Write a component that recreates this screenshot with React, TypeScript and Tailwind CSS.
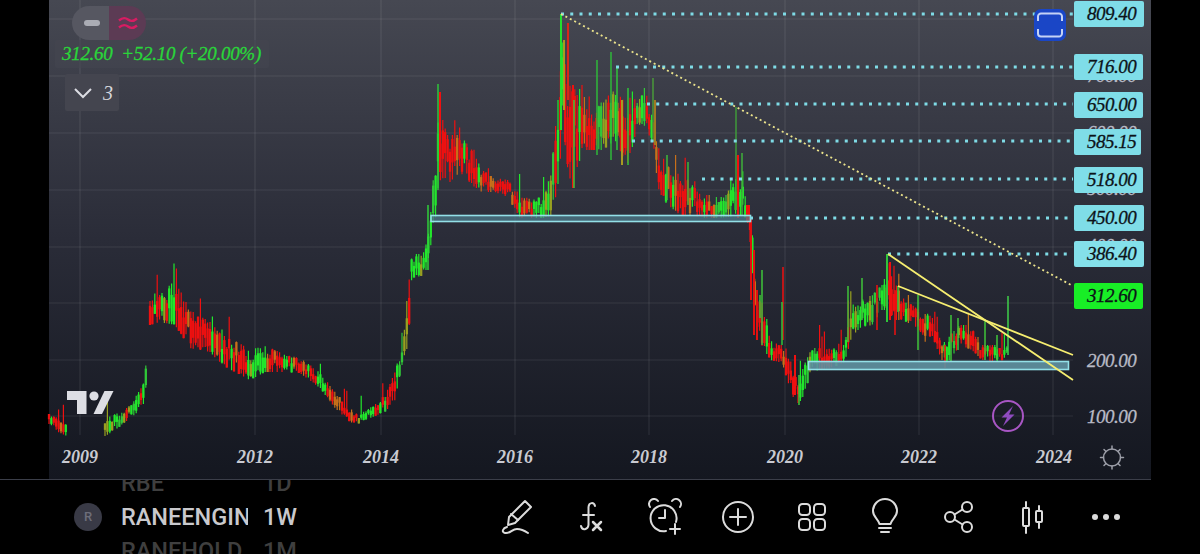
import React from 'react';

// price envelope of the bars: [x, top y, bottom y]
const SEGMENTS: number[][][] = [
  [[49, 414, 425], [58, 418, 432], [67, 425, 436]],
  [[105, 420, 436], [112, 415, 432], [122, 412, 425], [130, 405, 418], [138, 393, 412], [143, 385, 405], [147, 357, 395]],
  [
    [150, 292, 325], [160, 295, 322], [175, 280, 325], [190, 310, 348], [210, 322, 352], [222, 335, 365], [235, 340, 372],
    [250, 350, 380], [265, 345, 372], [285, 355, 372], [300, 358, 373], [320, 372, 388], [335, 392, 408], [350, 408, 422],
    [358, 415, 424], [370, 408, 418], [385, 395, 412], [395, 372, 400], [402, 345, 365], [408, 290, 345], [412, 255, 278],
    [425, 252, 275], [430, 215, 250], [436, 150, 215], [440, 110, 180], [447, 135, 185], [460, 135, 172], [472, 150, 185],
    [482, 170, 192], [495, 178, 192], [508, 180, 197], [520, 195, 218], [532, 200, 218], [545, 195, 218], [552, 165, 215],
    [558, 100, 190], [563, 40, 125], [569, 85, 180], [576, 90, 170], [584, 105, 150], [592, 115, 150], [603, 100, 150],
    [615, 90, 140], [627, 105, 165], [636, 105, 135], [645, 90, 125], [653, 115, 145], [658, 150, 195], [668, 165, 205],
    [680, 170, 215], [692, 185, 216], [704, 195, 218], [716, 195, 218], [730, 190, 217], [740, 170, 215], [747, 205, 218],
    [751, 218, 250], [754, 255, 300], [757, 297, 335], [764, 305, 350], [771, 340, 360], [779, 345, 362], [785, 345, 372],
    [792, 365, 395], [798, 385, 405], [804, 365, 395], [811, 350, 372], [820, 345, 370], [832, 350, 368], [845, 338, 362],
    [852, 305, 335], [862, 300, 328], [872, 295, 325], [882, 285, 310], [888, 270, 310], [894, 280, 320], [903, 298, 320],
    [912, 305, 325], [922, 312, 345], [932, 315, 335], [942, 345, 362], [950, 335, 360], [960, 325, 345], [972, 325, 350],
    [982, 345, 360], [995, 345, 362], [1003, 350, 360], [1008, 345, 352],
  ],
];

// the long wicks that stick out of the envelope
const SPIKES: [number, number, number, string, number][] = [
  [438, 84, 190, '#2fc43a', 1.5], [440, 92, 172, '#f01010', 2], [428, 205, 270, '#2fd03a', 1.5], [561, 14, 130, '#22e02c', 2], [564, 40, 110, '#a89a22', 2],
  [568, 23, 100, '#d8261a', 2], [573, 85, 188, '#f01010', 2], [574, 100, 188, '#3fc43a', 1.5], [597, 60, 155, '#2fb83a', 1.5], [611, 52, 160, '#2fb83a', 1.5],
  [617, 67, 150, '#2fc43a', 1.5], [628, 88, 165, '#2fc43a', 1.5], [622, 100, 165, '#a89a22', 2], [653, 78, 142, '#4a9a3a', 1.5], [655, 100, 145, '#a07a22', 2],
  [736, 107, 210, '#3f9a3a', 1.5], [742, 153, 215, '#3fb03a', 1.5], [738, 155, 218, '#f01010', 2], [667, 155, 200, '#3fb83a', 1.5], [688, 162, 205, '#3fb83a', 1.5],
  [748, 205, 222, '#f01010', 4], [751, 218, 300, '#e01010', 2], [754, 250, 335, '#e01010', 2], [757, 290, 340, '#e01010', 2],
  [783, 267, 340, '#f01010', 1.5], [782, 302, 345, '#2fc43a', 1.5], [848, 286, 342, '#3fc43a', 1.5], [862, 278, 320, '#3fc43a', 1.5], [877, 285, 330, '#f01010', 1.5],
  [887, 254, 322, '#2fc43a', 2], [890, 262, 320, '#f01010', 2], [895, 290, 335, '#f01010', 1.5], [898, 286, 312, '#2fc43a', 1.5], [918, 295, 350, '#3fc43a', 1.5],
  [945, 345, 368, '#f01010', 1.5], [951, 315, 362, '#3fc43a', 1.5], [958, 318, 350, '#3fc43a', 1.5], [985, 320, 360, '#3fc43a', 1.5], [997, 335, 360, '#3fc43a', 1.5],
  [1008, 296, 355, '#3fd04a', 1.5], [799, 375, 405, '#3fc43a', 1.5], [795, 355, 395, '#f01010', 2], [760, 295, 318, '#3fc43a', 1.5], [762, 270, 345, '#3fc43a', 1.5],
];

type Bar = { x: number; bt: number; bb: number; wt: number; wb: number; color: string };

function buildBars(): Bar[] {
  let seed = 11;
  const rnd = () => {
    seed = (seed * 16807) % 2147483647;
    return seed / 2147483647;
  };
  const falling = ['#f01010', '#f01010', '#f01010', '#f01010', '#22e82c', '#c8701a'];
  const rising = ['#22e82c', '#22e82c', '#22e82c', '#f01010', '#98a020', '#30c838'];
  const bars: Bar[] = [];
  for (const seg of SEGMENTS) {
    let i = 0;
    for (let x = seg[0][0]; x <= seg[seg.length - 1][0]; x += 2.4) {
      while (i < seg.length - 2 && x > seg[i + 1][0]) i++;
      const [x0, t0, b0] = seg[i];
      const [x1, t1, b1] = seg[i + 1];
      const f = (x - x0) / (x1 - x0);
      const top = t0 + (t1 - t0) * f;
      const bot = b0 + (b1 - b0) * f;
      const h = bot - top;
      const a = top + rnd() * h * 0.5;
      const b = a + Math.max(3, h * (0.3 + rnd() * 0.4));
      const pool = t1 >= t0 ? falling : rising;
      // now and then a wick pokes out above the envelope
      const poke = rnd() < 0.14 ? 6 + rnd() * 16 : 0;
      bars.push({
        x,
        bt: a,
        bb: Math.min(b, bot),
        wt: Math.max(top, a - rnd() * h * 0.5) - poke,
        wb: Math.min(bot, b + rnd() * h * 0.5),
        color: pool[Math.floor(rnd() * pool.length)],
      });
    }
  }
  return bars;
}

const BARS = buildBars();
const GRID_X = [80, 255, 381, 515, 649, 785, 919, 1053];
const GRID_Y = [19, 76, 133, 190, 247, 303, 360, 416];
const DOTTED: [number, number][] = [[561, 14], [616, 67], [647, 104], [632, 141], [702, 179], [750, 218], [888, 254]];

const AxisPrice = ({ top, children }: { top: string; children: string }) => (
  <span className={`absolute left-[1087px] ${top} text-[19px] leading-none italic tracking-[-0.5px] text-[#b9bbc6] [-webkit-text-stroke:0.3px]`}>{children}</span>
);

const PRICE_TAGS = [
  { text: '809.40', cls: 'top-[1px] w-[70px] bg-[#7fdde8]' },
  { text: '716.00', cls: 'top-[54px] w-[69px] bg-[#7fdde8]' },
  { text: '650.00', cls: 'top-[92px] w-[69px] bg-[#7fdde8]' },
  { text: '585.15', cls: 'top-[129px] w-[67px] bg-[#7fdde8]' },
  { text: '518.00', cls: 'top-[167px] w-[69px] bg-[#7fdde8]' },
  { text: '450.00', cls: 'top-[205px] w-[70px] bg-[#7fdde8]' },
  { text: '386.40', cls: 'top-[241px] w-[70px] bg-[#84e0ea]' },
  { text: '312.60', cls: 'top-[283px] w-[69px] bg-[#18ee26]' },
];

const YEARS = [
  { text: '2009', cls: 'left-[62px]' },
  { text: '2012', cls: 'left-[237px]' },
  { text: '2014', cls: 'left-[363px]' },
  { text: '2016', cls: 'left-[497px]' },
  { text: '2018', cls: 'left-[631px]' },
  { text: '2020', cls: 'left-[767px]' },
  { text: '2022', cls: 'left-[901px]' },
  { text: '2024', cls: 'left-[1036px]' },
];

const iconProps = {
  fill: 'none',
  stroke: '#dcdcdc',
  strokeWidth: 2,
  strokeLinecap: 'round' as const,
  strokeLinejoin: 'round' as const,
};

const Tool = ({ children }: { children: React.ReactNode }) => (
  <div className="flex w-[73.5px] justify-center">
    <svg width="36" height="38" viewBox="0 0 36 38" {...iconProps}>
      {children}
    </svg>
  </div>
);

const ChartCanvas = () => (
  <svg className="absolute left-0 top-0" width="1151" height="479" viewBox="0 0 1151 479">
    {GRID_Y.map((y) => (
      <line key={y} x1="49" x2="1073" y1={y} y2={y} stroke="#ffffff" strokeOpacity="0.09" strokeWidth="1.2" />
    ))}
    {GRID_X.map((x) => (
      <line key={x} x1={x} x2={x} y1="0" y2="435" stroke="#ffffff" strokeOpacity="0.09" strokeWidth="1.2" />
    ))}

    {BARS.map((b, i) => (
      <g key={i} stroke={b.color}>
        <line x1={b.x} x2={b.x} y1={b.wt} y2={b.wb} strokeWidth="1.2" />
        <line x1={b.x} x2={b.x} y1={b.bt} y2={b.bb} strokeWidth="2.3" />
      </g>
    ))}
    {SPIKES.map(([x, t, b, c, w], i) => (
      <line key={i} x1={x} x2={x} y1={t} y2={b} stroke={c} strokeWidth={w} />
    ))}

    <rect x="431" y="215.5" width="319.5" height="6" fill="#4f7f8e" fillOpacity="0.7" stroke="#93e0e8" strokeWidth="1.6" />
    <rect x="808.5" y="361.5" width="260" height="8" fill="#5f92a2" fillOpacity="0.9" stroke="#93e0e8" strokeWidth="1.6" />

    {DOTTED.map(([x, y]) => (
      <line key={y} x1={x} x2="1073" y1={y} y2={y} stroke="#7fdbe6" strokeWidth="3" strokeDasharray="3 6.25" />
    ))}

    <line x1="561" y1="14" x2="1073" y2="286" stroke="#ece48c" strokeWidth="1.8" strokeDasharray="2 3" />
    <line x1="888" y1="254" x2="1073" y2="380" stroke="#f6ee70" strokeWidth="1.8" />
    <line x1="898" y1="286" x2="1073" y2="355" stroke="#f6ee70" strokeWidth="1.8" />

    {/* tradingview mark */}
    <path d="M67 391H86.5V414H77V400H67Z" fill="#dddee4" />
    <circle cx="94" cy="396" r="4.6" fill="#dddee4" />
    <path d="M104.5 391H113.5L102 414H93.5Z" fill="#dddee4" />

    {/* bolt badge */}
    <circle cx="1008" cy="416" r="15" fill="none" stroke="#a856c4" strokeWidth="2" />
    <path d="M1013 406L1001.500 417.500H1007L1003 426L1014.500 414.500H1009Z" fill="#8f4cc0" />

    {/* sun */}
    <g fill="none" stroke="#9c9ea8" strokeWidth="1.5" strokeLinecap="round">
      <circle cx="1112" cy="457.500" r="8.500" />
      <path d="M1112 446V449M1112 466V469M1100.500 457.500H1103.500M1120.500 457.500H1123.500M1104 449.500L1106 451.500M1118 463.500L1120 465.500M1120 449.500L1118 451.500M1106 463.500L1104 465.500" />
    </g>
  </svg>
);

export default function App() {
  return (
    <div className="flex h-[554px] w-[1200px] flex-col overflow-hidden bg-black font-['Liberation_Serif',serif]">
      <div className="relative h-[480px] w-[1151px] border-b border-[#3b3e49]">
        <div className="absolute bottom-0 left-[49px] right-0 top-0 bg-linear-to-b from-[#464852] via-[#2a2c38] via-50% to-[#141720]" />
        <ChartCanvas />

        {/* price scale, most of it under the tags */}
        <AxisPrice top="top-[66px]">700.00</AxisPrice>
        <AxisPrice top="top-[123px]">600.00</AxisPrice>
        <AxisPrice top="top-[179px]">500.00</AxisPrice>
        <AxisPrice top="top-[236px]">400.00</AxisPrice>
        <AxisPrice top="top-[351px]">200.00</AxisPrice>
        <AxisPrice top="top-[407px]">100.00</AxisPrice>

        {PRICE_TAGS.map((t) => (
          <div key={t.text} className={`absolute left-[1074px] flex h-[26px] items-center rounded-[2px] pl-[13px] text-[19px] italic tracking-[-0.5px] text-[#0c1218] [-webkit-text-stroke:0.3px] ${t.cls}`}>
            {t.text}
          </div>
        ))}

        {/* legend */}
        <div className="absolute left-[72px] top-[6px] flex h-[34px] w-[74px] overflow-hidden rounded-full">
          <div className="flex w-[37px] items-center justify-center bg-[#565761]">
            <div className="ml-[2px] h-[6px] w-[16px] rounded-[3px] bg-[#aaacb4]" />
          </div>
          <div className="flex flex-1 items-center justify-center bg-[#5c3b54]">
            <svg width="20" height="16" viewBox="0 0 20 16" fill="none" stroke="#d81c62" strokeWidth="2.400">
              <path d="M1 5.500C5 2 8 3 10 4.500S15 7 19 3.500" />
              <path d="M1 12.500C5 9 8 10 10 11.500S15 14 19 10.500" />
            </svg>
          </div>
        </div>
        <div className="absolute left-[55px] top-[40px] flex h-[28px] w-[214px] items-center rounded-[2px] bg-[#454650]/60 pl-[7px] text-[19px] italic tracking-[-0.3px] text-[#2ad63a] whitespace-pre [-webkit-text-stroke:0.3px]">
          312.60  +52.10 (+20.00%)
        </div>
        <div className="absolute left-[65px] top-[74px] flex h-[37px] w-[54px] items-center gap-[11px] rounded-[2px] bg-[#44454f] pl-[9px] text-[20px] italic text-[#d6d7dd]">
          <svg width="18" height="12" viewBox="0 0 18 12" fill="none" stroke="#dcdde3" strokeWidth="2">
            <path d="M1 2L9 10L17 2" />
          </svg>
          3
        </div>

        {YEARS.map((y) => (
          <span key={y.text} className={`absolute top-[447px] text-[18px] font-bold italic leading-5 text-[#c9cad1] ${y.cls}`}>
            {y.text}
          </span>
        ))}

        {/* fullscreen button */}
        <div className="absolute left-[1034px] top-[9px] flex h-[32px] w-[32px] items-center justify-center rounded-[7px] bg-[#1a46c6]">
          <svg width="26" height="26" viewBox="0 0 26 26" fill="none" stroke="#c4d2f6" strokeWidth="2">
            <path d="M1 9V4.500A3 3 0 0 1 4 1.500H22A3 3 0 0 1 25 4.500V9" />
            <path d="M1 17V21.500A3 3 0 0 0 4 24.500H22A3 3 0 0 0 25 21.500V17" />
          </svg>
        </div>
      </div>

      <div className="flex flex-1 items-center overflow-hidden">
        {/* symbol picker wheel */}
        <div className="flex w-[481px] shrink-0 items-center pl-[74px] font-['Roboto',sans-serif]">
          <div className="flex h-[28px] w-[28px] items-center justify-center rounded-full bg-[#393a46] text-[13px] font-medium text-[#6d6e7a]">R</div>
          <div className="ml-[19px] flex h-[74px] flex-col justify-center gap-[9px] text-[23.500px] leading-[25px] font-medium">
            <div className="flex text-[#3f3f3f]">
              <span className="w-[142px]"><span className="block w-[127px] overflow-hidden whitespace-nowrap">RBE</span></span>
              <span>1D</span>
            </div>
            <div className="flex text-[#c9c9cd]">
              <span className="w-[142px]"><span className="block w-[127px] overflow-hidden whitespace-nowrap">RANEENGINE</span></span>
              <span>1W</span>
            </div>
            <div className="flex text-[#3f3f3f]">
              <span className="w-[142px]"><span className="block w-[127px] overflow-hidden whitespace-nowrap">RANEHOLD</span></span>
              <span>1M</span>
            </div>
          </div>
        </div>

        {/* toolbar */}
        <div className="flex items-center">
          <Tool>
            <path d="M25 3L31 9L15 25L8 27L9 19Z" />
            <path d="M11 16L18 22" />
            <path d="M7 29C3 30 1 34 5 35C10 36 12 31 17 31C22 31 25 33 28 35" />
          </Tool>
          <Tool>
            <path d="M22 8C21 4 16 4 15.500 9V27C15 32 9 33 8 28" />
            <path d="M10 17H21" />
            <path d="M20 24L28 32M28 24L20 32" strokeWidth="2.500" />
          </Tool>
          <Tool>
            <path d="M19 33A13 13 0 1 1 29 24" />
            <path d="M3 9A5 5 0 0 1 11 3M33 9A5 5 0 0 0 25 3" />
            <path d="M18 12V20H12" />
            <path d="M28 26V36M23 31H33" />
          </Tool>
          <Tool>
            <circle cx="18" cy="19" r="15" />
            <path d="M18 11V27M10 19H26" />
          </Tool>
          <Tool>
            <rect x="5" y="6" width="11" height="11" rx="3.500" />
            <rect x="20" y="6" width="11" height="11" rx="3.500" />
            <rect x="5" y="21" width="11" height="11" rx="3.500" />
            <rect x="20" y="21" width="11" height="11" rx="3.500" />
          </Tool>
          <Tool>
            <path d="M12.500 26C11.500 21 6 19 6 13A12 12 0 0 1 30 13C30 19 24.500 21 23.500 26Z" />
            <path d="M12 30H24M14 34H22" />
          </Tool>
          <Tool>
            <circle cx="26" cy="9" r="5" />
            <circle cx="9" cy="19" r="5" />
            <circle cx="26" cy="29" r="5" />
            <path d="M13.500 16.500L21.500 11.500M13.500 21.500L21.500 26.500" />
          </Tool>
          <Tool>
            <rect x="9" y="10" width="6" height="18" rx="1" />
            <path d="M12 4V10M12 28V35" />
            <rect x="22" y="13" width="6" height="11" rx="1" />
            <path d="M25 8V13M25 24V30" />
          </Tool>
          <Tool>
            <circle cx="7" cy="19" r="3" fill="#dcdcdc" stroke="none" />
            <circle cx="18" cy="19" r="3" fill="#dcdcdc" stroke="none" />
            <circle cx="29" cy="19" r="3" fill="#dcdcdc" stroke="none" />
          </Tool>
        </div>
      </div>
    </div>
  );
}
